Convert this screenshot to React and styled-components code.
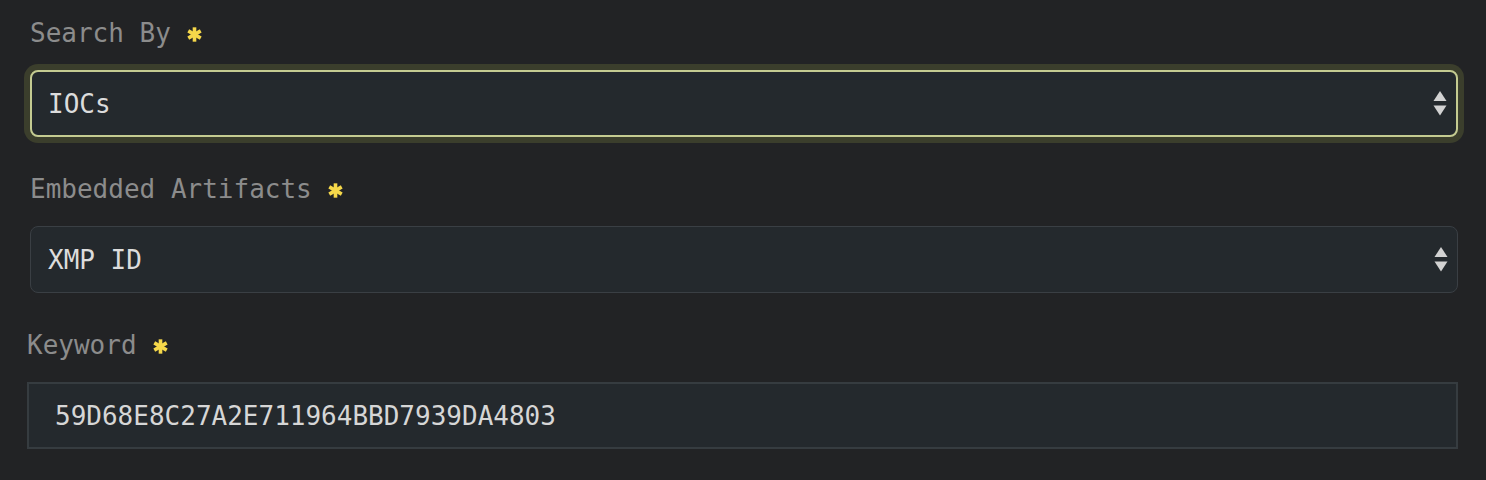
import React from 'react'
import styled, { createGlobalStyle } from 'styled-components'

const GlobalStyle = createGlobalStyle`
    html, body {
        margin: 0;
        padding: 0;
        background: #222325;
    }
`

const Form = styled.form`
    padding: 16px 28px 0 30px;
    font-family: "DejaVu Sans Mono", "Liberation Mono", monospace;
`

const Field = styled.div`
    margin-bottom: 35px;
    margin-left: ${props => (props.$shift ? `-${props.$shift}px` : '0')};
`

const Label = styled.label`
    display: flex;
    align-items: center;
    gap: 16px;
    height: 34px;
    margin-bottom: 20px;
    font-size: 26px;
    color: #8c8c8c;
`

const Star = styled.svg`
    width: 15px;
    height: 15px;
    margin-top: 2px;
`

const SelectBox = styled.div`
    display: flex;
    align-items: center;
    height: 67px;
    box-sizing: border-box;
    padding: 0 17px;
    padding-left: ${props => (props.$focused ? '16px' : '17px')};
    background: #24292d;
    border: ${props => (props.$focused ? '2px solid #c4cb91' : '1px solid #3a3f44')};
    border-radius: 8px;
    box-shadow: ${props => (props.$focused ? '0 0 0 6px #3b3e2c' : 'none')};
    color: #dcdcdc;
    font-size: 26px;
`

const Value = styled.span`
    flex: 1;
`

const Arrows = styled.svg`
    width: 14px;
    height: 25px;
    margin-right: -8px;
`

const TextInput = styled.div`
    display: flex;
    align-items: center;
    height: 67px;
    box-sizing: border-box;
    padding-left: 26px;
    background: #24292d;
    border: 2px solid #363c40;
    color: #d6d6d6;
    font-size: 26px;
`

const Required = () => (
    <Star viewBox="0 0 14 14">
        <g stroke="#f6d84a" strokeWidth="3.4" strokeLinecap="butt">
            <line x1="7" y1="0.3" x2="7" y2="13.7" />
            <line x1="1.2" y1="3.65" x2="12.8" y2="10.35" />
            <line x1="1.2" y1="10.35" x2="12.8" y2="3.65" />
        </g>
    </Star>
)

const UpDown = () => (
    <Arrows viewBox="0 0 14 25">
        <polygon points="7,0 13.5,10 0.5,10" fill="#d2d2d2" />
        <polygon points="0.5,14.5 13.5,14.5 7,24.5" fill="#d2d2d2" />
    </Arrows>
)

const App = () => {
    return (
        <>
            <GlobalStyle />
            <Form>
                <Field>
                    <Label>
                        Search By <Required />
                    </Label>
                    <SelectBox $focused>
                        <Value>IOCs</Value>
                        <UpDown />
                    </SelectBox>
                </Field>
                <Field>
                    <Label>
                        Embedded Artifacts <Required />
                    </Label>
                    <SelectBox>
                        <Value>XMP ID</Value>
                        <UpDown />
                    </SelectBox>
                </Field>
                <Field $shift={3}>
                    <Label>
                        Keyword <Required />
                    </Label>
                    <TextInput>59D68E8C27A2E711964BBD7939DA4803</TextInput>
                </Field>
            </Form>
        </>
    )
}

export default App
